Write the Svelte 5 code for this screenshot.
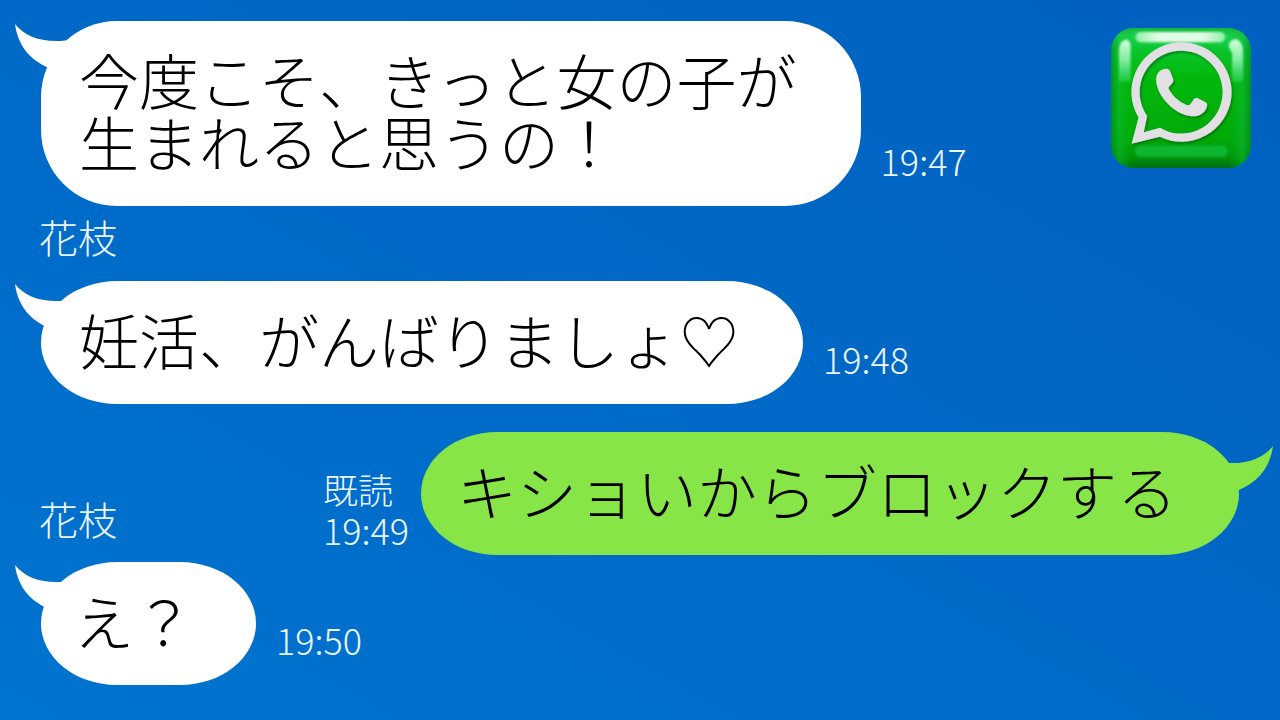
<script>
  const hanae = '花枝';
  const messages = [
    { id: 1, text: '今度こそ、きっと女の子が\n生まれると思うの！', tall: true, time: '19:47', badge: true },
    { id: 2, from: hanae, text: '妊活、がんばりましょ♡', time: '19:48' },
    { id: 3, mine: true, text: 'キショいからブロックする', read: '既読', time: '19:49', next: hanae },
    { id: 4, text: 'え？', time: '19:50', short: true }
  ];
</script>

{#snippet tail()}
  <svg class="tail" viewBox="0 0 60 44" aria-hidden="true">
    <path d="M0 0C9 11 23 18 46 17L54 16L60 44L34 44C15 36 3 22 0 0Z" />
  </svg>
{/snippet}

{#snippet logo()}
  <svg class="logo" viewBox="33 25 420 422" role="img" aria-label="WhatsApp">
    <defs>
      <linearGradient id="body" x1="0" y1="0" x2="0" y2="1">
        <stop offset="0" stop-color="#10b83c" />
        <stop offset=".06" stop-color="#1cd052" />
        <stop offset=".16" stop-color="#08c52a" />
        <stop offset=".35" stop-color="#02b80c" />
        <stop offset=".8" stop-color="#00a908" />
        <stop offset=".92" stop-color="#009508" />
        <stop offset="1" stop-color="#006d12" />
      </linearGradient>
      <linearGradient id="sides" x1="0" y1="0" x2="1" y2="0">
        <stop offset="0" stop-color="#007a24" stop-opacity=".5" />
        <stop offset=".06" stop-color="#11c33d" stop-opacity=".4" />
        <stop offset=".16" stop-color="#00b010" stop-opacity="0" />
        <stop offset=".84" stop-color="#00b010" stop-opacity="0" />
        <stop offset=".94" stop-color="#11b93d" stop-opacity=".5" />
        <stop offset="1" stop-color="#007a24" stop-opacity=".5" />
      </linearGradient>
      <linearGradient id="shine" x1="0" y1="0" x2="0" y2="1">
        <stop offset="0" stop-color="#d4ffe0" />
        <stop offset=".5" stop-color="#8df0aa" stop-opacity=".9" />
        <stop offset="1" stop-color="#3be07a" stop-opacity=".4" />
      </linearGradient>
      <linearGradient id="glare" x1="0" y1="0" x2="1" y2="0">
        <stop offset="0" stop-color="#8ff0a8" />
        <stop offset=".25" stop-color="#e2fbe6" />
        <stop offset=".75" stop-color="#e2fbe6" />
        <stop offset="1" stop-color="#8ff0a8" />
      </linearGradient>
      <filter id="soft" x="-20%" y="-50%" width="140%" height="200%">
        <feGaussianBlur stdDeviation="3" />
      </filter>
      <filter id="drop" x="-10%" y="-10%" width="125%" height="125%">
        <feDropShadow dx="4" dy="6" stdDeviation="4" flood-color="#005c08" flood-opacity=".6" />
      </filter>
    </defs>
    <rect x="33" y="25" width="420" height="422" rx="66" fill="url(#body)" />
    <rect x="33" y="25" width="420" height="422" rx="66" fill="url(#sides)" />
    <rect x="106" y="37" width="270" height="31" rx="15" fill="url(#glare)" filter="url(#soft)" />
    <path d="M56 184V94Q58 62 78 60Q94 62 91 94V184Q72 192 56 184Z" fill="url(#shine)" filter="url(#soft)" />
    <path d="M397 184V100Q383 82 389 70Q398 56 413 60Q429 70 430 94V184Q414 192 397 184Z" fill="url(#shine)" filter="url(#soft)" />
    <rect x="104" y="380" width="280" height="34" rx="17" fill="#14c84c" opacity=".6" filter="url(#soft)" />
    <g fill="#e2e0e4" filter="url(#drop)">
      <path
        fill-rule="evenodd"
        d="M115 295A151 150 0 1 1 179 353L94 374ZM141 290L131 339L180 326A125 125 0 1 0 141 290Z"
      />
      <path
        d="M168 182C168 164 178 150 195 148C204 147 208 149 211 157L219 178C222 187 217 192 209 200C205 204 205 207 208 212C221 233 236 247 260 257C265 259 268 258 271 254L280 242C284 236 288 235 294 237L316 248C322 251 323 255 321 262C316 281 296 293 275 291C247 289 219 272 196 246C180 227 168 202 168 182Z"
      />
    </g>
  </svg>
{/snippet}

<main class="chat">
  {#each messages as m (m.id)}
    {#if m.from}
      <p class="name">{m.from}</p>
    {/if}
    <article class="row" class:mine={m.mine} class:short={m.short} class:tall={m.tall}>
      {#if m.next}
        <p class="name">{m.next}</p>
      {/if}
      <div class="bubble">
        {@render tail()}
        <p class="text">{m.text}</p>
      </div>
      <div class="meta">
        {#if m.read}<span class="read">{m.read}</span>{/if}
        <time>{m.time}</time>
      </div>
      {#if m.badge}
        {@render logo()}
      {/if}
    </article>
  {/each}
</main>

<style>
  :global(body) {
    margin: 0;
  }

  .chat {
    box-sizing: border-box;
    min-height: 100vh;
    padding: 21px 41px 35px;
    display: flex;
    flex-direction: column;
    overflow: hidden;
    background: linear-gradient(to bottom left, #0060bf 0%, #0068c6 45%, #0074cf 100%);
    color: #eaf6ff;
    font-family: 'Noto Sans CJK JP', sans-serif;
    font-weight: 300;
  }

  p {
    margin: 0;
  }

  .name {
    margin: 10px 0 25px -2px;
    font-size: 39px;
    line-height: 40px;
  }

  .row {
    display: flex;
    align-items: flex-end;
    gap: 20px;
  }

  .bubble {
    position: relative;
    padding: 27px 64px 34px 38px;
    border-radius: 76px / 50%;
    background: #fff;
    color: #000;
  }

  .tall .bubble {
    border-radius: 76px;
  }

  .text {
    font-size: 60px;
    line-height: 62px;
    white-space: pre;
  }

  .tail {
    position: absolute;
    left: -26px;
    top: 3px;
    width: 60px;
    height: 44px;
    fill: #fff;
  }

  .meta {
    display: flex;
    flex-direction: column;
    margin-bottom: 26px;
    font-size: 36px;
    line-height: 40px;
  }

  .read {
    font-size: 35px;
  }

  .logo {
    flex: none;
    width: 140px;
    height: 140px;
    margin: 7px -12px 0 auto;
    align-self: flex-start;
  }

  .mine {
    margin: 28px 0 7px;
    gap: 12px;
  }

  .mine .name {
    margin: 0 auto 17px -2px;
  }

  .mine .bubble {
    order: 1;
    padding: 27px 62px 34px 36px;
    background: #87e548;
  }

  .mine .meta {
    margin-bottom: 6px;
  }

  .mine .tail {
    left: auto;
    right: -34px;
    top: 14px;
    transform: scaleX(-1);
    fill: #87e548;
  }

  .short .bubble {
    padding: 27px 62px 34px 33px;
  }
</style>
